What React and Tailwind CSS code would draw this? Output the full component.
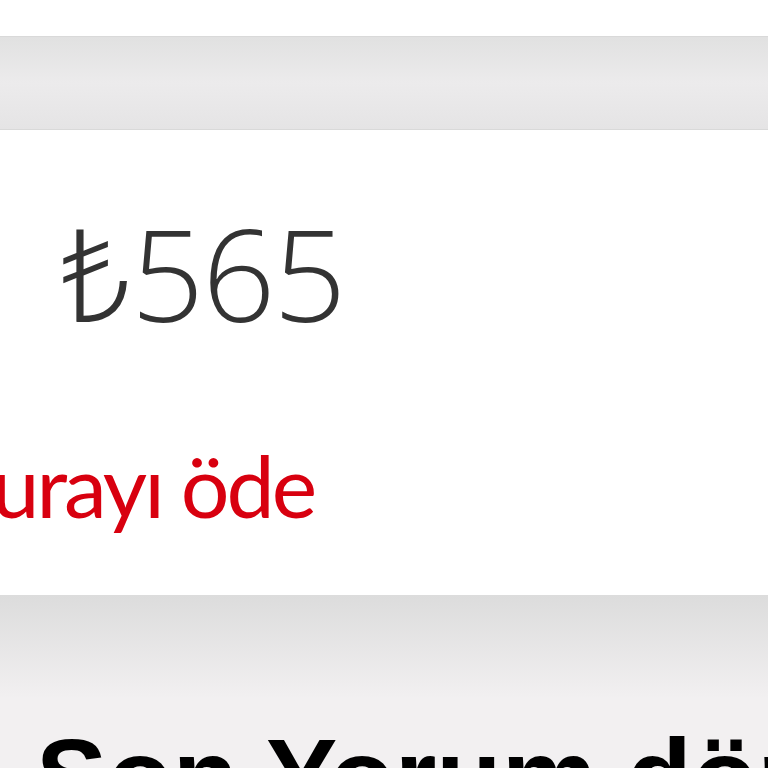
import React from 'react';

export default function App() {
    return (
        <div className="w-[768px] h-[768px] overflow-hidden bg-white">
            <div className="h-[36px] bg-white" />
            <div className="h-[94px] border-y border-[#d9d9d9] bg-gradient-to-b from-[#e1e1e1] via-[#ecebec] to-[#e5e4e5]" />
            <div className="h-[465px] bg-white pt-[79px] pl-[60px]" style={{ fontFamily: '"Open Sans", "Noto Sans", sans-serif' }}>
                <div className="text-[128px] leading-none font-light text-[#333333] tracking-[-2px]">₺565</div>
                <div className="mt-[105px] -ml-[175px] text-[86px] leading-none text-[#d8000f] whitespace-nowrap tracking-[-3px]" style={{ fontFamily: 'Lato, "Open Sans", sans-serif' }}>
                    Faturayı öde
                </div>
            </div>
            <div className="h-[173px] bg-gradient-to-b from-[#dcdcdc] via-[#f2f0f1] via-60% to-[#f2f0f1] pt-[129px] pl-[36px]">
                <h2 className="text-[107px] leading-none font-bold text-black whitespace-nowrap" style={{ fontFamily: '"Liberation Sans", Arial, sans-serif' }}>
                    Son Yorum dönemi
                </h2>
            </div>
        </div>
    );
}
